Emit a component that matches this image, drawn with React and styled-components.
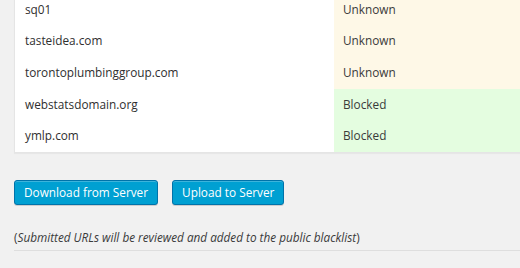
import React from 'react';
import styled, { createGlobalStyle } from 'styled-components';

const GlobalStyle = createGlobalStyle`
  html, body {
    margin: 0;
    padding: 0;
    background: #f1f1f1;
  }
  body {
    font-family: "Open Sans", "Liberation Sans", sans-serif;
    color: #444;
    overflow: hidden;
  }
`;

const rows = [
  { id: 1, domain: 'sq01', status: 'Unknown' },
  { id: 2, domain: 'tasteidea.com', status: 'Unknown' },
  { id: 3, domain: 'torontoplumbinggroup.com', status: 'Unknown' },
  { id: 4, domain: 'webstatsdomain.org', status: 'Blocked' },
  { id: 5, domain: 'ymlp.com', status: 'Blocked' },
];

const Page = styled.div`
  width: 520px;
  height: 268px;
  overflow: hidden;
  padding-left: 14px;
  box-sizing: border-box;
`;

const Table = styled.div`
  margin-top: -6px;
  width: 540px;
  background: #fff;
  border: 1px solid #e5e5e5;
  border-top: none;
  box-shadow: 0 1px 1px rgba(0, 0, 0, 0.04);
`;

const Row = styled.div`
  display: grid;
  grid-template-columns: 319px 1fr;
  height: 31.6px;
`;

const Domain = styled.div`
  display: flex;
  align-items: center;
  padding: 0 0 2px 10px;
  font-size: 11.8px;
  color: #2f2f2f;
`;

const Status = styled.div`
  display: flex;
  align-items: center;
  padding: 0 0 2px 9px;
  font-size: 11.8px;
  color: #3a3a3a;
  background: ${({ $status }) => ($status === 'Blocked' ? '#e4fde0' : '#fef8e7')};
`;

const Actions = styled.div`
  display: flex;
  gap: 14px;
  margin-top: 27px;
`;

const Button = styled.button`
  height: 25px;
  padding: 0 9px 1px;
  font-family: "Open Sans", "Liberation Sans", sans-serif;
  font-size: 11.8px;
  color: #fff;
  background: #00a0d2;
  border: 1px solid #0073aa;
  border-radius: 3px;
  box-shadow: inset 0 1px 0 rgba(120, 200, 230, 0.5), 0 1px 0 rgba(0, 0, 0, 0.15);
  cursor: pointer;
`;

const Note = styled.p`
  margin: 22px 0 0;
  font-size: 11.75px;
  color: #3a3a3a;
  line-height: 20px;
  padding-bottom: 3px;
  border-bottom: 1px solid #dedede;
`;

const App = () => {
  return (
    <Page>
      <GlobalStyle />
      <Table>
        {rows.map((row) => (
          <Row key={row.id}>
            <Domain>{row.domain}</Domain>
            <Status $status={row.status}>{row.status}</Status>
          </Row>
        ))}
      </Table>
      <Actions>
        <Button>Download from Server</Button>
        <Button>Upload to Server</Button>
      </Actions>
      <Note>
        (<em>Submitted URLs will be reviewed and added to the public blacklist</em>)
      </Note>
    </Page>
  );
};

export default App;
